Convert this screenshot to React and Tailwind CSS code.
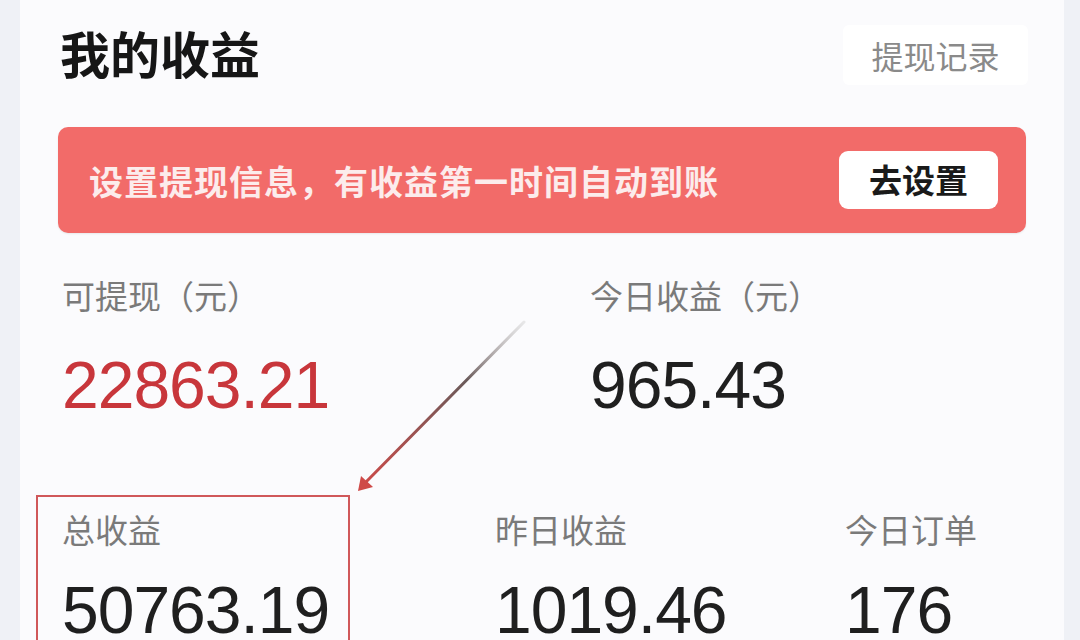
import React from "react";

const cjk = { fontFamily: '"Noto Sans CJK SC", "Noto Sans", sans-serif' };
const num = { fontFamily: '"Liberation Sans", Arial, sans-serif' };

function Stat({ label, value, red, gap, className = "" }) {
  return (
    <div className={className}>
      <div style={cjk} className="text-[33px] leading-[40px] text-[#7a7a7a] whitespace-nowrap">
        {label}
      </div>
      <div
        style={num}
        className={`${gap} text-[66px] leading-none tracking-[-1px] whitespace-nowrap ${red ? "text-[#c8363b]" : "text-[#1f1f1f]"}`}
      >
        {value}
      </div>
    </div>
  );
}

export default function App() {
  return (
    <div className="relative w-[1080px] h-[640px] overflow-hidden bg-[#eff1f6] flex">
      <div className="ml-[20px] w-[1044px] h-full bg-[#fbfbfd] overflow-hidden">
        <div className="h-[106px] flex items-center justify-between pl-[40px] pr-[36px] pb-[2px]">
          <div style={cjk} className="text-[50px] font-bold leading-none text-[#161616]">
            我的收益
          </div>
          <div
            style={cjk}
            className="mt-[6px] w-[185px] h-[60px] flex items-center justify-center bg-white text-[32px] text-[#8a8a8a] rounded-md"
          >
            提现记录
          </div>
        </div>
        <div className="mx-[38px] mt-[21px] h-[106px] rounded-[10px] bg-[#f26b69] flex items-center justify-between pl-[31px] pr-[28px] shadow-[0_1px_2px_rgba(0,0,0,0.08)]">
          <div style={cjk} className="text-[34px] font-bold text-[#fcecec] whitespace-nowrap tracking-[1px]">
            设置提现信息，有收益第一时间自动到账
          </div>
          <div
            style={cjk}
            className="w-[159px] h-[58px] bg-white rounded-[9px] flex items-center justify-center text-[33px] font-bold text-[#1a1a1a]"
          >
            去设置
          </div>
        </div>
        <div className="flex mt-[42px] pl-[42px]">
          <Stat className="w-[528px]" gap="mt-[37px]" label="可提现（元）" value="22863.21" red />
          <Stat gap="mt-[37px]" label="今日收益（元）" value="965.43" />
        </div>
        <div className="flex mt-[77px] pl-[16px]">
          <div className="shrink-0 w-[314px] h-[170px] border-2 border-[#d0585a] pl-[24px] pt-[12px]">
            <Stat gap="mt-[28px]" label="总收益" value="50763.19" />
          </div>
          <Stat className="ml-[145px] pt-[14px] w-[350px]" gap="mt-[28px]" label="昨日收益" value="1019.46" />
          <Stat className="pt-[14px]" gap="mt-[28px]" label="今日订单" value="176" />
        </div>
      </div>
      <svg className="absolute left-0 top-0 pointer-events-none" width="1080" height="640">
        <defs>
          <linearGradient id="arr" x1="524" y1="322" x2="360" y2="488" gradientUnits="userSpaceOnUse">
            <stop offset="0" stopColor="#c9c9c9" stopOpacity="0.4" />
            <stop offset="0.35" stopColor="#6a5a5a" />
            <stop offset="1" stopColor="#cf4a48" />
          </linearGradient>
        </defs>
        <line x1="524" y1="322" x2="364" y2="484" stroke="url(#arr)" strokeWidth="3" strokeLinecap="round" />
        <path d="M358 491 L361 476 L373 487 Z" fill="#cf4a48" />
      </svg>
    </div>
  );
}
